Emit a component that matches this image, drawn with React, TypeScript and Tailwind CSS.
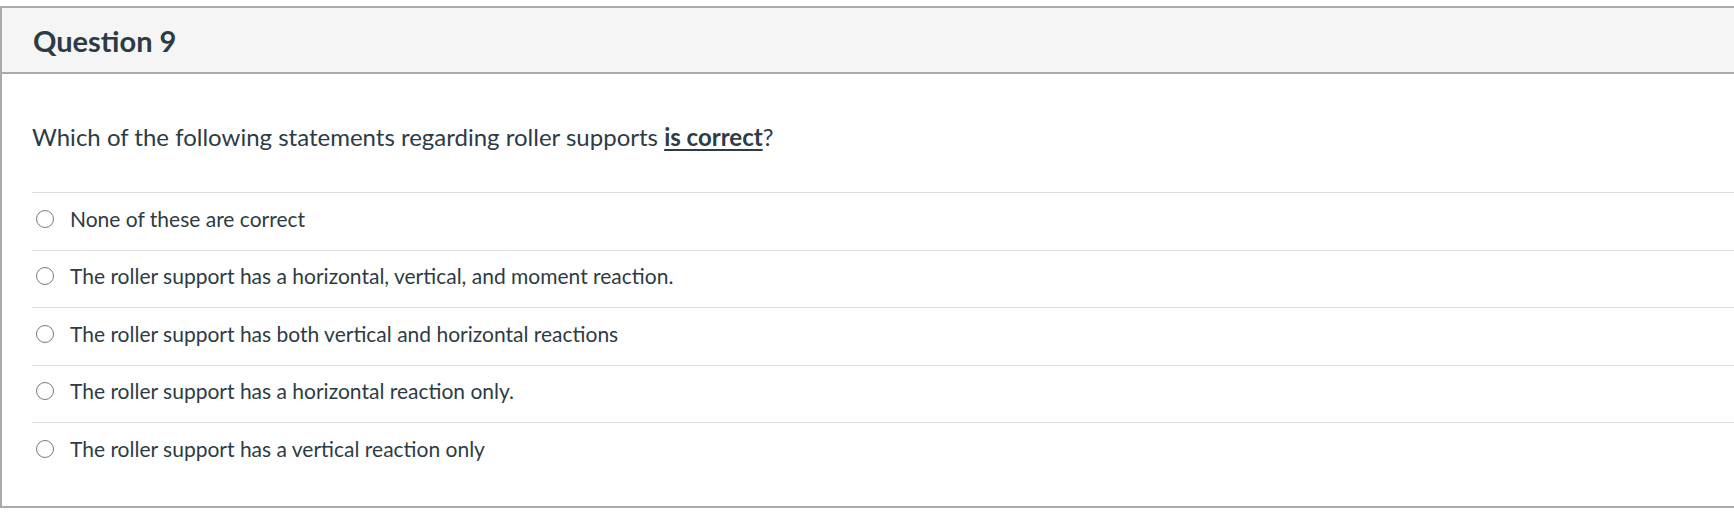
import React from "react";

const answers = [
  "None of these are correct",
  "The roller support has a horizontal, vertical, and moment reaction.",
  "The roller support has both vertical and horizontal reactions",
  "The roller support has a horizontal reaction only.",
  "The roller support has a vertical reaction only",
];

export default function App() {
  return (
    <div
      className="w-full bg-white pt-[6px] text-[#2d3b45]"
      style={{ fontFamily: "Lato, 'Noto Sans', sans-serif" }}
    >
      <div className="border-y-2 border-l-2 border-[#aaaaaa]">
        {/* Header */}
        <div className="h-[66px] flex items-center bg-[#f5f5f5] border-b-2 border-[#aaaaaa] pl-[31px]">
          <h2 className="text-[29px] font-bold leading-[35px]">Question 9</h2>
        </div>

        {/* Body */}
        <div className="pl-[30px] pt-[47px] pb-[26px]">
          <p className="text-[24px] leading-[32px] mb-[39px]">
            Which of the following statements regarding roller supports{" "}
            <span className="font-bold underline decoration-2 underline-offset-[3px]">is correct</span>?
          </p>

          <div>
            {answers.map((a) => (
              <label
                key={a}
                className="flex items-center border-t border-[#dddddd] pt-[10.5px] pb-[16px] pl-[4px]"
              >
                <span className="w-[18px] h-[18px] rounded-full border-[1.5px] border-[#7a7a7a] bg-white shrink-0" />
                <span className="ml-[16px] text-[21px] leading-[30px]">{a}</span>
              </label>
            ))}
          </div>
        </div>
      </div>
    </div>
  );
}
